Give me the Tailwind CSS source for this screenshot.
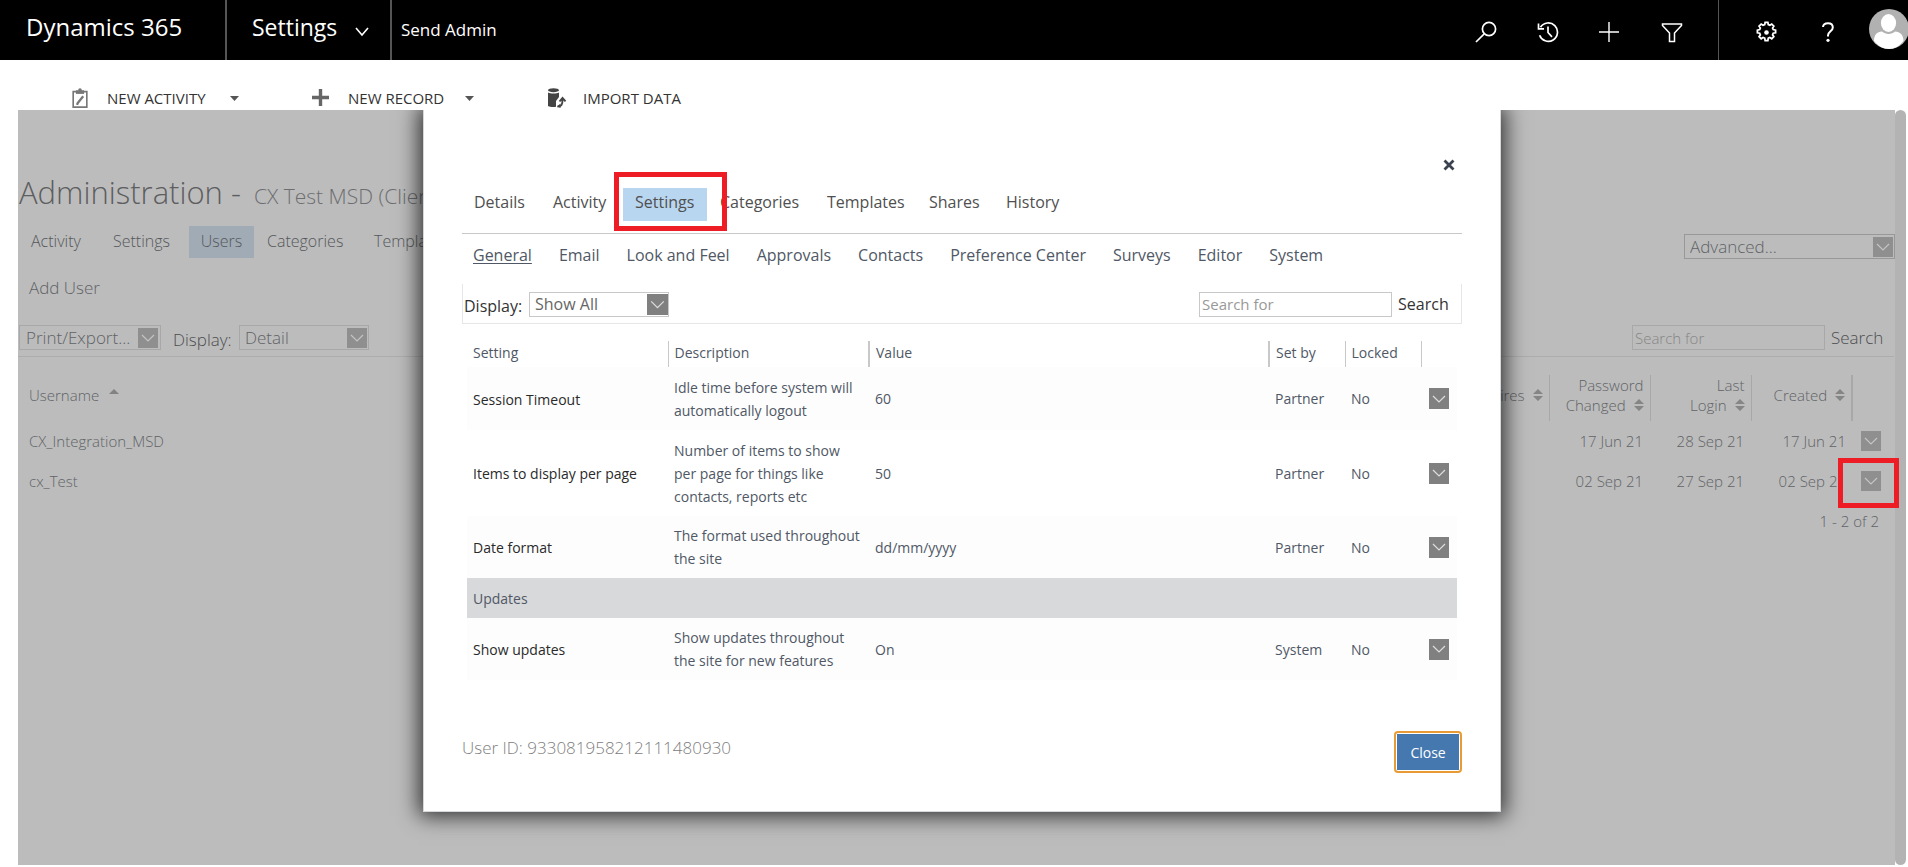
<!DOCTYPE html>
<html lang="en">
<head>
<meta charset="utf-8">
<title>Dynamics 365 - Send Admin</title>
<script src="https://cdn.jsdelivr.net/npm/@tailwindcss/browser@4"></script>
</head>
<body class="min-h-screen flex flex-col bg-white text-[#3b4350] font-['Open_Sans','Noto_Sans',sans-serif]">
<svg class="hidden" aria-hidden="true">
  <symbol id="chev" viewBox="0 0 20 20"><path d="M4 7l6 6 6-6" fill="none" stroke="currentColor" stroke-width="1.2"/></symbol>
  <symbol id="sort" viewBox="0 0 10 12"><path d="M5 0l5 5H0zM0 7h10l-5 5z" fill="currentColor"/></symbol>
</svg>

<header class="h-[60px] shrink-0 bg-black text-white flex items-stretch overflow-hidden">
  <a href="#" class="w-[225px] pl-[26px] pt-[9px] text-[24px] leading-[36px]">Dynamics 365</a>
  <button class="w-[165px] border-l-2 border-[#555] pl-[25px] flex items-start pt-[9px] text-[23px] leading-[36px]">Settings
    <svg class="w-[14px] h-[10px] mt-[18px] ml-[18px]" viewBox="0 0 14 10"><path d="M1 1l6 7 6-7" fill="none" stroke="#fff" stroke-width="1.6"/></svg>
  </button>
  <a href="#" class="border-l-2 border-[#555] pl-[9px] pt-[17px] text-[17px] leading-[26px]">Send Admin</a>
  <nav class="ml-auto flex items-center pt-1">
    <button aria-label="Search" class="mr-[40px]"><svg class="w-[22px] h-[22px]" viewBox="0 0 22 22" fill="none" stroke="#fff" stroke-width="1.7"><circle cx="14" cy="8" r="6.6"/><path d="M9.2 12.8L1 21"/></svg></button>
    <button aria-label="Recent" class="mr-[40px]"><svg class="w-[22px] h-[22px]" viewBox="0 0 22 22" fill="none" stroke="#fff" stroke-width="1.7"><path d="M3.5 6.2A9.2 9.2 0 1 1 2.6 14.2M1.5 2.5v5.300h5.500M11 5.500v6l4 4.300"/></svg></button>
    <button aria-label="New" class="mr-[42px]"><svg class="w-[20px] h-[20px]" viewBox="0 0 20 20" stroke="#fff" stroke-width="1.4"><path d="M10 0v20M0 10h20"/></svg></button>
    <button aria-label="Filter" class="mr-[35px]"><svg class="w-[22px] h-[22px]" viewBox="0 0 22 22" fill="none" stroke="#fff" stroke-width="1.5"><path d="M1.500 3h19v1.500l-7 7.500v8.500h-5V12l-7-7.500z"/></svg></button>
    <span class="w-px h-[64px] bg-[#555] mr-[36px]"></span>
    <button aria-label="Options" class="mr-[43px]"><svg class="w-[23px] h-[23px]" viewBox="0 0 22 22" fill="none" stroke="#fff" stroke-width="1.7"><path d="M9.300 3.500L9.700 1.300h2.600l.4 2.200 1.500.6 1.800-1.200 2 2-1.200 1.800.6 1.500 2.300.5v2.600l-2.300.4-.6 1.500 1.200 1.800-2 2-1.800-1.200-1.500.6-.4 2.300H9.700l-.4-2.300-1.600-.6-1.800 1.200-2-2 1.200-1.800-.6-1.500-2.200-.4V8.700l2.200-.5.6-1.500-1.200-1.800 2-2 1.800 1.200z"/><circle cx="11" cy="11" r="2.200" fill="#fff" stroke="none"/></svg></button>
    <button aria-label="Help" class="mr-[34px]"><svg class="w-[14px] h-[20px]" viewBox="0 0 14 20"><path d="M2 5C2.200 2.300 4.300 1.200 7 1.200c3 0 4.800 1.600 4.800 4.200C11.800 9.300 7 9.300 7 13.500v1" fill="none" stroke="#fff" stroke-width="2"/><circle cx="7" cy="18.300" r="1.600" fill="#fff"/></svg></button>
    <button aria-label="Account" class="w-[39px] h-10 mb-[7px] overflow-hidden"><svg class="w-10 h-10 max-w-none" viewBox="0 0 40 40"><circle cx="20" cy="20" r="20" fill="#b1b1b1"/><ellipse cx="19.500" cy="14" rx="7.600" ry="9" fill="#fff"/><path d="M5 32c0-6 3-9.500 8-9.500 2 1.500 4 2.500 6.500 2.500s5-1 6.500-2.500c5 0 8.500 3.500 8.500 9.500-4 5-9 8-14.500 8S9 37 5 32z" fill="#fff"/></svg></button>
  </nav>
</header>

<div class="h-[50px] shrink-0 flex items-center pt-[26px] pl-[72px] text-[15px] leading-5 text-[#333]">
  <button class="flex items-center w-[240px]">
    <svg class="w-[16px] h-[20px] mr-[19px]" viewBox="0 0 17 22" fill="none" stroke="#777"><path d="M1 4h15v17H1z" stroke-width="1.800"/><path d="M4 2.500h9v4H4z" fill="#777" stroke="none"/><circle cx="8.500" cy="2.200" r="2" fill="#777" stroke="none"/><path d="M12 9l-6 7.500-.8 2" stroke-width="2.600"/></svg>
    NEW ACTIVITY
    <svg class="w-[9px] h-[5px] ml-[24px]" viewBox="0 0 9 5"><path d="M0 0h9L4.500 5z" fill="#555"/></svg>
  </button>
  <button class="flex items-center w-[235px]">
    <svg class="w-[17px] h-[17px] mr-[19px] mb-[2px]" viewBox="0 0 17 17"><path d="M8.500 0v17M0 8.500h17" stroke="#666" stroke-width="3.400"/></svg>
    NEW RECORD
    <svg class="w-[9px] h-[5px] ml-[21px]" viewBox="0 0 9 5"><path d="M0 0h9L4.500 5z" fill="#555"/></svg>
  </button>
  <button class="flex items-center">
    <svg class="w-[19px] h-[20px] mr-[17px]" viewBox="0 0 19 20"><ellipse cx="6.500" cy="2.200" rx="5.500" ry="2" fill="#444"/><path d="M1 4.500c2.500 1.300 8.500 1.300 11 0v4.500L9 13v5.700c-3 .6-6 .3-8-.7z" fill="#444"/><path d="M10.500 18.500c4 0 5-1.500 5-7M12.500 13.500l3-3.500 3 3.500" fill="none" stroke="#444" stroke-width="1.900"/><path d="M10 18.500l3.500-3v4.500z" fill="#444"/></svg>
    IMPORT DATA
  </button>
</div>

<div class="relative flex-1 mb-[2px] ml-[18px] mr-[2px] flex">
  <main class="flex-1 min-w-0 overflow-hidden bg-[#bcbcbc] text-[#606366]">
    <h1 class="mt-[60px] h-[44px] leading-[44px] text-[31px] font-light text-[#5c5e60] whitespace-nowrap pl-px">Administration&nbsp;- <span class="ml-[5px] text-[21px] text-[#6c6e70]">CX Test MSD (Client)</span></h1>
    <div class="flex items-start justify-between mt-[12px]">
      <nav class="flex text-[16px] leading-[30px] h-8 font-light text-[#55585b]">
        <a href="#" class="pl-[13px] w-[83px]">Activity</a>
        <a href="#" class="pl-[12px] w-[88px]">Settings</a>
        <a href="#" class="w-[65px] h-8 text-center bg-[#a1abb5]">Users</a>
        <a href="#" class="pl-[13px] w-[107px]">Categories</a>
        <a href="#" class="pl-[13px]">Templates</a>
      </nav>
      <div class="relative w-[211px] mt-2">
        <select aria-label="Advanced" class="appearance-none w-full h-[25px] border border-[#989898] pl-[5px] text-[17px] leading-[22px] font-light"><option>Advanced...</option></select>
        <svg class="pointer-events-none absolute right-[2px] top-[3px] w-5 h-5 bg-[#8f8f8f] text-[#c4c4c4]"><use href="#chev"/></svg>
      </div>
    </div>
    <a href="#" class="block w-24 mt-[17px] pl-[11px] text-[17px] leading-6 font-light">Add User</a>
    <div class="mt-[19px] h-[38px] flex items-center border-b border-[#adadad] mr-px pl-px text-[17px] font-light">
      <div class="relative w-[142px]">
        <select aria-label="Print or export" class="appearance-none w-full h-[25px] border border-[#a8a8a8] pl-[6px] leading-[22px]"><option>Print/Export...</option></select>
        <svg class="pointer-events-none absolute right-[3px] top-[3px] w-5 h-5 bg-[#8f8f8f] text-[#c4c4c4]"><use href="#chev"/></svg>
      </div>
      <label for="bgdisp" class="ml-[12px] w-[66px] pt-1 text-[#4c4e50]">Display:</label>
      <div class="relative w-[130px]">
        <select id="bgdisp" class="appearance-none w-full h-[25px] border border-[#a8a8a8] pl-[5px] leading-[22px]"><option>Detail</option></select>
        <svg class="pointer-events-none absolute right-[2px] top-[3px] w-5 h-5 bg-[#8f8f8f] text-[#c4c4c4]"><use href="#chev"/></svg>
      </div>
      <input aria-label="Search users" placeholder="Search for" class="ml-auto w-[193px] h-[25px] border border-[#a8a8a8] pl-[2px] text-[15px] placeholder:text-[#858585]">
      <button class="ml-[6px] mr-[12px] w-[51px] text-[#4c4e50] text-left">Search</button>
    </div>
    <table class="w-full table-fixed text-[15px] leading-5 font-light mt-[18px]">
      <colgroup><col><col class="w-[130px]"><col class="w-[101px]"><col class="w-[101px]"><col class="w-[101px]"><col class="w-[43px]"></colgroup>
      <thead class="text-right">
        <tr class="h-[46px]">
          <th class="font-light text-left pl-[11px] pb-[6px]">Username <svg class="inline w-[10px] h-[5px] ml-[6px] mb-[10px]" viewBox="0 0 10 5"><path d="M5 0l5 5H0z" fill="#808284"/></svg></th>
          <th class="font-light pr-[6px] pb-[6px] border-r border-[#a8a8a8]">Expires <svg class="inline w-[10px] h-3 ml-1 mb-1 text-[#858585]"><use href="#sort"/></svg></th>
          <th class="font-light pr-[6px] pb-[6px] border-r border-[#a8a8a8]">Password Changed <svg class="inline w-[10px] h-3 ml-1 mb-1 text-[#858585]"><use href="#sort"/></svg></th>
          <th class="font-light pr-[6px] pb-[6px] pl-[30px] border-r border-[#a8a8a8]">Last Login <svg class="inline w-[10px] h-3 ml-1 mb-1 text-[#858585]"><use href="#sort"/></svg></th>
          <th class="font-light pr-[6px] pb-[6px] border-r-2 border-[#a8a8a8] whitespace-nowrap">Created <svg class="inline w-[10px] h-3 ml-1 mb-1 text-[#858585]"><use href="#sort"/></svg></th>
          <th></th>
        </tr>
      </thead>
      <tbody class="text-right">
        <tr class="h-10"><td class="text-left pl-[11px]">CX_Integration_MSD</td><td></td><td class="pr-[7px]">17 Jun 21</td><td class="pr-[7px]">28 Sep 21</td><td class="pr-[6px]">17 Jun 21</td>
          <td><button aria-label="Actions" class="block ml-[9px] w-5 h-5 bg-[#8f8f8f] text-[#c4c4c4]"><svg class="w-5 h-5"><use href="#chev"/></svg></button></td></tr>
        <tr class="h-10"><td class="text-left pl-[11px]">cx_Test</td><td></td><td class="pr-[7px]">02 Sep 21</td><td class="pr-[7px]">27 Sep 21</td><td class="pr-[6px]">02 Sep 21</td>
          <td><button aria-label="Actions" class="block ml-[9px] w-5 h-5 bg-[#8f8f8f] text-[#c4c4c4]"><svg class="w-5 h-5"><use href="#chev"/></svg></button></td></tr>
      </tbody>
    </table>
    <p class="mt-[10px] pr-[16px] text-right text-[15px] leading-5 font-light">1 - 2 of 2</p>
  </main>
  <div class="w-[11px] bg-[#b3b3b3] rounded-full"></div>
  <span class="absolute right-[7px] top-[348px] w-[61px] h-[50px] border-5 border-[#ee1c25] pointer-events-none"></span>

  <div class="absolute inset-0 overflow-hidden pointer-events-none">
  <section role="dialog" aria-label="User settings" class="pointer-events-auto ml-[405px] w-[57.1%] h-[702px] bg-white border border-t-0 border-[#d5d8da] shadow-[0_0_20px_4px_rgba(0,0,0,0.75)] px-[38px] flex flex-col">
    <button aria-label="Close dialog" class="mt-[49px] ml-auto mr-[7px]"><svg class="w-3 h-3" viewBox="0 0 12 12"><path d="M1.500 1.500l9 9M10.500 1.500l-9 9" stroke="#3b4350" stroke-width="2.800"/></svg></button>
    <nav class="relative mt-[17px] h-[46px] flex items-start text-[16px] leading-[29px] text-[#505050] border-b border-[#c8c8c8]">
      <a href="#" class="pl-[12px] w-[91px]">Details</a>
      <a href="#" class="w-[70px]">Activity</a>
      <a href="#" class="w-[84px] h-[33px] pl-[12px] bg-[#b9d6f0]">Settings</a>
      <a href="#" class="pl-[13px] w-[120px]">Categories</a>
      <a href="#" class="w-[102px]">Templates</a>
      <a href="#" class="w-[77px]">Shares</a>
      <a href="#">History</a>
      <span class="absolute left-[152px] -top-[16px] w-[113px] h-[59px] border-5 border-[#ee1c25]"></span>
    </nav>
    <nav class="mt-[9px] pl-[11px] flex gap-[27px] text-[16px] leading-6 whitespace-nowrap text-[#505866]">
      <a href="#" class="underline underline-offset-2">General</a><a href="#">Email</a><a href="#">Look and Feel</a><a href="#">Approvals</a><a href="#">Contacts</a><a href="#">Preference Center</a><a href="#">Surveys</a><a href="#">Editor</a><a href="#">System</a>
    </nav>
    <div class="mt-[17px] h-[40px] flex items-center border border-t-0 border-[#e6e6e8] pt-px text-[16px] text-[#333]">
      <label for="disp" class="pl-px w-[66px] pt-1">Display:</label>
      <div class="relative w-[140px]">
        <select id="disp" class="appearance-none w-full h-[25px] border border-[#c8c8c8] pl-[5px] leading-[22px] text-[#666]"><option>Show All</option></select>
        <svg class="pointer-events-none absolute right-px top-[2px] w-[21px] h-[21px] bg-[#808080] text-[#ddd]"><use href="#chev"/></svg>
      </div>
      <input aria-label="Search settings" placeholder="Search for" class="ml-auto w-[193px] h-[25px] border border-[#c8c8c8] pl-[2px] text-[15px] placeholder:text-[#999]">
      <button class="ml-[6px] mr-[11px] w-[52px] text-left">Search</button>
    </div>
    <div class="mt-[17px] px-[5px]">
    <table class="w-full table-fixed text-[14px] leading-[23px] text-left text-[#505866]">
      <colgroup><col class="w-[201px]"><col class="w-[201px]"><col><col class="w-[76px]"><col class="w-[76px]"><col class="w-[36px]"></colgroup>
      <thead><tr class="h-[26px] align-top">
        <th class="font-normal pl-[6px] border-r border-[#c8c8c8]">Setting</th><th class="font-normal pl-[6px] border-r-2 border-[#c8c8c8]">Description</th><th class="font-normal pl-[6px] border-r-2 border-[#c8c8c8]">Value</th><th class="font-normal pl-[6px] border-r border-[#c8c8c8]">Set by</th><th class="font-normal pl-[6px] border-r border-[#c8c8c8]">Locked</th><th></th></tr></thead>
      <tbody>
        <tr class="h-[63px] bg-[#fdfdfd]"><td class="pl-[6px] pt-px text-[#2a2a2a]">Session Timeout</td><td class="pl-[6px] pt-px">Idle time before system will<br>automatically logout</td><td class="pl-[6px]">60</td><td class="pl-[6px]">Partner</td><td class="pl-[6px]">No</td><td><button aria-label="Actions" class="block ml-[8px] w-5 h-[21px] bg-[#808080] text-[#ddd]"><svg class="w-5 h-5"><use href="#chev"/></svg></button></td></tr>
        <tr class="h-[86px]"><td class="pl-[6px] text-[#2a2a2a]">Items to display per page</td><td class="pl-[6px]">Number of items to show<br>per page for things like<br>contacts, reports etc</td><td class="pl-[6px]">50</td><td class="pl-[6px]">Partner</td><td class="pl-[6px]">No</td><td><button aria-label="Actions" class="block ml-[8px] w-5 h-[21px] bg-[#808080] text-[#ddd]"><svg class="w-5 h-5"><use href="#chev"/></svg></button></td></tr>
        <tr class="h-[62px] bg-[#fdfdfd]"><td class="pl-[6px] text-[#2a2a2a]">Date format</td><td class="pl-[6px] whitespace-nowrap">The format used throughout<br>the site</td><td class="pl-[6px]">dd/mm/yyyy</td><td class="pl-[6px]">Partner</td><td class="pl-[6px]">No</td><td><button aria-label="Actions" class="block ml-[8px] w-5 h-[21px] bg-[#808080] text-[#ddd]"><svg class="w-5 h-5"><use href="#chev"/></svg></button></td></tr>
        <tr class="h-[40px] bg-[#d8d9db]"><th colspan="6" class="font-normal pl-[6px]">Updates</th></tr>
        <tr class="h-[62px] bg-[#fdfdfd]"><td class="pl-[6px] text-[#2a2a2a]">Show updates</td><td class="pl-[6px]">Show updates throughout<br>the site for new features</td><td class="pl-[6px]">On</td><td class="pl-[6px]">System</td><td class="pl-[6px]">No</td><td><button aria-label="Actions" class="block ml-[8px] w-5 h-[21px] bg-[#808080] text-[#ddd]"><svg class="w-5 h-5"><use href="#chev"/></svg></button></td></tr>
      </tbody>
    </table>
    </div>
    <footer class="mt-auto mb-[38px] flex items-start justify-between">
      <p class="mt-[5px] text-[17px] leading-6 font-light text-[#808080]">User ID: 933081958212111480930</p>
      <button class="w-[68px] h-[42px] border-2 border-[#e89a34] rounded-[4px] p-px"><span class="flex h-full items-center justify-center bg-[#4678b0] text-white text-[14px]">Close</span></button>
    </footer>
  </section>
  </div>
</div>
</body>
</html>
